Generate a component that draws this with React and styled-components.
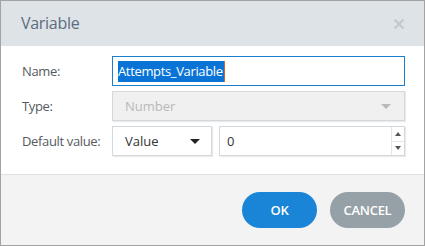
import React from "react";
import styled, { createGlobalStyle } from "styled-components";

const Global = createGlobalStyle`
  html, body { margin: 0; padding: 0; background: #ffffff; }
  body { font-family: "Open Sans", "Noto Sans", sans-serif; }
  * { box-sizing: border-box; }
`;

const Dialog = styled.div`
  width: 425px;
  height: 246px;
  border: 1px solid #a3a3a3;
  display: flex;
  flex-direction: column;
  background: #ffffff;
`;

const Header = styled.div`
  height: 45px;
  background: #dee3e7;
  display: flex;
  align-items: center;
  justify-content: space-between;
  padding: 0 19px 0 20px;
`;

const Title = styled.div`
  font-size: 16px;
  color: #5c6c7f;
  letter-spacing: -0.3px;
  margin-top: -1px;
`;

const Close = styled.div`
  width: 12px;
  height: 12px;
  display: flex;
  margin-top: 1px;
`;

const Body = styled.div`
  height: 129px;
  padding: 10px 19px 0 20px;
  border-bottom: 1px solid #dde2e6;
  display: flex;
  flex-direction: column;
  gap: 5px;
`;

const Row = styled.div`
  display: grid;
  grid-template-columns: 91px 1fr;
  align-items: center;
  height: 30px;
`;

const Label = styled.div`
  font-size: 13px;
  color: #555a5e;
  letter-spacing: -0.35px;
  padding-left: 1px;
`;

const Field = styled.div`
  height: 30px;
  border: 1px solid ${(p) => (p.$focus ? "#1b7fce" : "#d3d8dc")};
  background: ${(p) => (p.$disabled ? "#f0f0f0" : "#ffffff")};
  box-shadow: ${(p) => (p.$focus ? "none" : "1px 1px 1px rgba(0,0,0,0.08)")};
  display: flex;
  align-items: center;
  padding: 0 0 0 ${(p) => p.$pad || 12}px;
  font-size: 13px;
  color: ${(p) => (p.$disabled ? "#b8b8b8" : "#333333")};
  width: ${(p) => (p.$w ? p.$w + "px" : "auto")};
  flex: ${(p) => (p.$w ? "none" : "1")};
  position: relative;
`;

const Selected = styled.span`
  background: #0a74d6;
  color: #ffffff;
  line-height: 21px;
  padding: 0 1px 0 0;
  letter-spacing: -0.35px;
`;

const Caret = styled.span`
  display: inline-block;
  width: 1px;
  height: 21px;
  background: #d9641c;
`;

const Value = styled.span`
  flex: 1;
`;

const Arrow = styled.span`
  width: 0;
  height: 0;
  border-left: 5px solid transparent;
  border-right: 5px solid transparent;
  border-top: 5px solid ${(p) => p.$color};
  margin-right: ${(p) => p.$mr}px;
`;

const Pair = styled.div`
  display: flex;
  gap: 7px;
`;

const Spinner = styled.div`
  width: 13px;
  align-self: stretch;
  border-left: 1px solid #e3e6e9;
  display: flex;
  flex-direction: column;
`;

const SpinBtn = styled.div`
  flex: 1;
  display: flex;
  align-items: center;
  justify-content: center;
  border-top: ${(p) => (p.$down ? "1px solid #e3e6e9" : "none")};
`;

const SmallTri = styled.span`
  width: 0;
  height: 0;
  border-left: 3px solid transparent;
  border-right: 3px solid transparent;
  ${(p) =>
    p.$down
      ? "border-top: 4px solid #555;"
      : "border-bottom: 4px solid #555;"}
`;

const Footer = styled.div`
  flex: 1;
  background: #f3f3f3;
  display: flex;
  justify-content: flex-end;
  align-items: flex-start;
  gap: 13px;
  padding: 17px 19px 0 0;
`;

const Button = styled.button`
  width: 75px;
  height: 36px;
  border: none;
  border-radius: 18px;
  background: ${(p) => p.$bg};
  color: #ffffff;
  font-family: "Open Sans", "Noto Sans", sans-serif;
  font-size: 13px;
  font-weight: 600;
  letter-spacing: -0.3px;
  padding: 0;
`;

export default function App() {
  return (
    <>
      <Global />
      <Dialog>
        <Header>
          <Title>Variable</Title>
          <Close>
            <svg width="12" height="12" viewBox="0 0 12 12">
              <path d="M1.5 1.5 L10.5 10.5 M10.5 1.5 L1.5 10.5" stroke="#c5c9cd" strokeWidth="2.4" />
            </svg>
          </Close>
        </Header>
        <Body>
          <Row>
            <Label>Name:</Label>
            <Field $focus $pad={5}>
              <Selected>Attempts_Variable</Selected>
              <Caret />
            </Field>
          </Row>
          <Row>
            <Label>Type:</Label>
            <Field $disabled>
              <Value>Number</Value>
              <Arrow $color="#b9b9b9" $mr={13} />
            </Field>
          </Row>
          <Row>
            <Label>Default value:</Label>
            <Pair>
              <Field $w={100}>
                <Value>Value</Value>
                <Arrow $color="#222" $mr={11} />
              </Field>
              <Field $pad={7}>
                <Value>0</Value>
                <Spinner>
                  <SpinBtn>
                    <SmallTri />
                  </SpinBtn>
                  <SpinBtn $down>
                    <SmallTri $down />
                  </SpinBtn>
                </Spinner>
              </Field>
            </Pair>
          </Row>
        </Body>
        <Footer>
          <Button $bg="#1a85d6">OK</Button>
          <Button $bg="#95a0a7">CANCEL</Button>
        </Footer>
      </Dialog>
    </>
  );
}
